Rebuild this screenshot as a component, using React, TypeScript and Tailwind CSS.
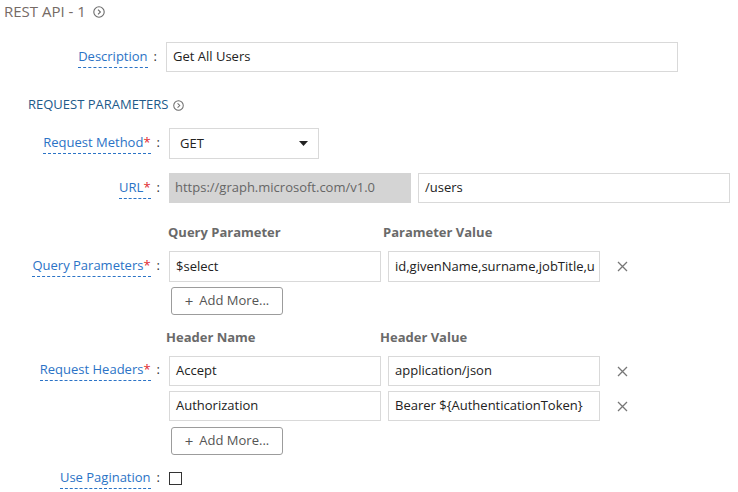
import React from "react";

const FONT = { fontFamily: '"Open Sans", "Noto Sans", Arial, sans-serif' };

function CircleChevron({ size = 12 }: { size?: number }) {
  return (
    <svg width={size} height={size} viewBox="0 0 12 12" fill="none">
      <circle cx="6" cy="6" r="5.2" stroke="#6b6b6b" strokeWidth="1.1" />
      <path d="M5 3.6L7.4 6L5 8.4" stroke="#6b6b6b" strokeWidth="1.1" fill="none" />
    </svg>
  );
}

function Label({ text, required, width = 160 }: { text: string; required?: boolean; width?: number }) {
  return (
    <div className="flex shrink-0 items-start justify-end pt-[1px]" style={{ width }}>
      <span className="border-b border-dashed border-[#2b73c6] pb-[2px] text-[13px] leading-[17px] text-[#2b73c6]">
        {text}
        {required && <span className="text-[#e0282e]">*</span>}
      </span>
      <span className="ml-[6px] text-[13px] leading-[17px] text-[#333]">:</span>
    </div>
  );
}

function Field({ value, className = "" }: { value: string; className?: string }) {
  return (
    <div
      className={`flex items-center overflow-hidden whitespace-nowrap border border-[#d9d9d9] bg-white px-[6px] text-[13px] text-[#222] ${className}`}
    >
      {value}
    </div>
  );
}

function RemoveX() {
  return (
    <svg width="11" height="11" viewBox="0 0 11 11" className="ml-[17px]">
      <path d="M1 1L10 10M10 1L1 10" stroke="#777" strokeWidth="1.3" />
    </svg>
  );
}

function AddMore() {
  return (
    <button className="ml-[2px] flex h-[28px] w-[112px] items-center justify-center rounded-[3px] border border-[#9c9c9c] bg-white text-[13px] text-[#555]">
      <span className="mr-[6px] text-[15px] leading-none">+</span>Add More...
    </button>
  );
}

export default function App() {
  return (
    <div className="h-[492px] w-[738px] overflow-hidden bg-white" style={FONT}>
      {/* Title */}
      <div className="ml-[4px] flex h-5 items-center pt-[3px]">
        <span className="text-[15px] text-[#756a65]">REST API - 1</span>
        <span className="ml-[7px] flex">
          <CircleChevron />
        </span>
      </div>

      {/* Description */}
      <div className="mt-[22px] flex items-center">
        <Label text="Description" width={157} />
        <Field value="Get All Users" className="ml-[9px] h-[30px] w-[512px]" />
      </div>

      {/* Section heading */}
      <div className="ml-[28px] mt-[25px] flex h-4 items-center">
        <span className="text-[13px] text-[#215a8a]">REQUEST PARAMETERS</span>
        <span className="ml-[5px] flex">
          <CircleChevron size={11} />
        </span>
      </div>

      {/* Request Method */}
      <div className="mt-[15px] flex items-center">
        <Label text="Request Method" required />
        <div className="ml-[9px] flex h-[31px] w-[150px] items-center justify-between border border-[#d9d9d9] bg-white pl-[10px] pr-[10px] text-[13px] text-[#222]">
          GET
          <svg width="9" height="5" viewBox="0 0 9 5">
            <path d="M0 0H9L4.5 5Z" fill="#222" />
          </svg>
        </div>
      </div>

      {/* URL */}
      <div className="mt-[14px] flex items-center">
        <Label text="URL" required />
        <div className="ml-[9px] flex h-[30px] w-[242px] items-center bg-[#d4d4d4] px-[6px] text-[13px] text-[#666]">
          https://graph.microsoft.com/v1.0
        </div>
        <Field value="/users" className="ml-[7px] h-[30px] w-[312px]" />
      </div>

      {/* Query Parameters */}
      <div className="mt-[21px] flex h-[18px] items-center text-[13px] font-bold text-[#6a6a6a]">
        <span className="ml-[168px] w-[215px]">Query Parameter</span>
        <span>Parameter Value</span>
      </div>
      <div className="mt-[9px] flex items-center">
        <Label text="Query Parameters" required />
        <Field value="$select" className="ml-[9px] h-[31px] w-[212px]" />
        <Field value="id,givenName,surname,jobTitle,u" className="ml-[7px] h-[31px] w-[212px]" />
        <RemoveX />
      </div>
      <div className="mt-[5px] flex">
        <div className="w-[169px]" />
        <AddMore />
      </div>

      {/* Request Headers */}
      <div className="mt-[14px] flex h-[18px] items-center text-[13px] font-bold text-[#6a6a6a]">
        <span className="ml-[166px] w-[214px]">Header Name</span>
        <span>Header Value</span>
      </div>
      <div className="mt-[9px] flex">
        <div className="pt-[4px]">
          <Label text="Request Headers" required />
        </div>
        <div className="ml-[9px] flex flex-col">
          <div className="flex items-center">
            <Field value="Accept" className="h-[30px] w-[212px]" />
            <Field value="application/json" className="ml-[7px] h-[30px] w-[212px]" />
            <RemoveX />
          </div>
          <div className="mt-[5px] flex items-center">
            <Field value="Authorization" className="h-[30px] w-[212px]" />
            <Field value="Bearer ${AuthenticationToken}" className="ml-[7px] h-[30px] w-[212px]" />
            <RemoveX />
          </div>
          <div className="mt-[6px] flex">
            <AddMore />
          </div>
        </div>
      </div>

      {/* Use Pagination */}
      <div className="mt-[13px] flex h-5 items-center">
        <Label text="Use Pagination" />
        <div className="ml-[9px] h-[13px] w-[13px] border border-[#333] bg-white" />
      </div>
    </div>
  );
}
